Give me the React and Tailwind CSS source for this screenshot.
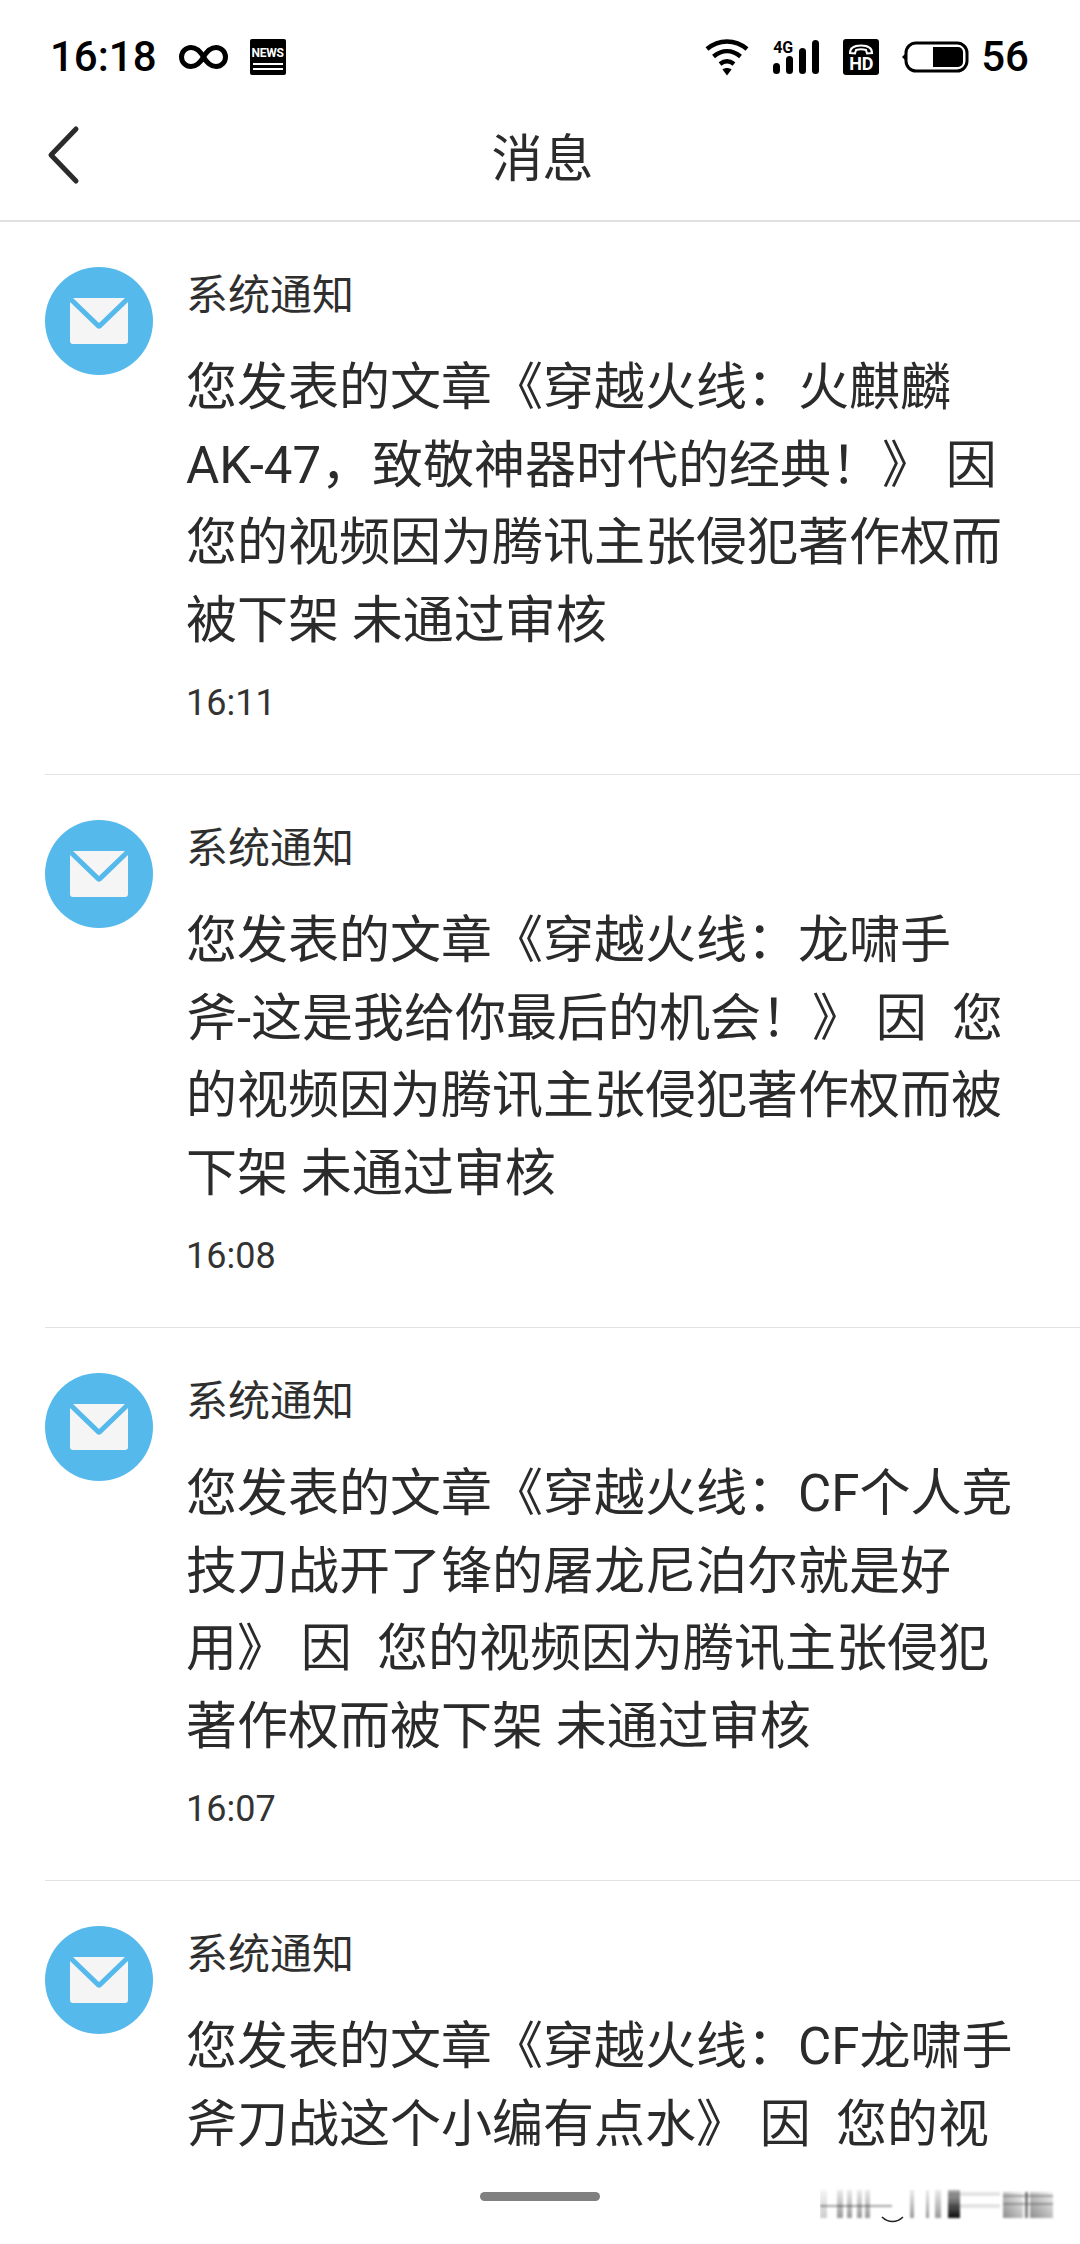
const COLON = '\uFF1A';
const COMMA = '\uFF0C';
const BANG = '\uFF01';

const items = [
  {
    lines: [`您发表的文章《穿越火线${COLON}火麒麟`, `AK-47${COMMA}致敬神器时代的经典${BANG}》 因`, '您的视频因为腾讯主张侵犯著作权而', '被下架 未通过审核'],
    time: '16:11',
  },
  {
    lines: [`您发表的文章《穿越火线${COLON}龙啸手`, `斧-这是我给你最后的机会${BANG}》 因  您`, '的视频因为腾讯主张侵犯著作权而被', '下架 未通过审核'],
    time: '16:08',
  },
  {
    lines: [`您发表的文章《穿越火线${COLON}CF个人竞`, '技刀战开了锋的屠龙尼泊尔就是好', '用》 因  您的视频因为腾讯主张侵犯', '著作权而被下架 未通过审核'],
    time: '16:07',
  },
  {
    lines: [`您发表的文章《穿越火线${COLON}CF龙啸手`, '斧刀战这个小编有点水》 因  您的视'],
  },
];

function StatusBar() {
  return (
    <div className="flex h-[96px] items-center justify-between pt-[18px] pl-[50px] pr-[51px] text-black">
      <div className="flex items-center gap-[22px]">
        <span className="font-['Roboto',sans-serif] text-[42px] leading-none font-medium">16:18</span>
        <svg width="49" height="24" viewBox="0 0 48 24" fill="none" stroke="black" strokeWidth="5">
          <path d="M24 12C20 5 16 2.500 11.500 2.500a9.500 9.500 0 0 0 0 19c4.500 0 8.500-2.500 12.500-9.500s8-9.500 12.500-9.500a9.500 9.500 0 0 1 0 19c-4.500 0-8.500-2.500-12.500-9.500Z" />
        </svg>
        <div className="flex h-[36px] w-[36px] flex-col items-center rounded-[2px] bg-black pt-[8px]">
          <span className="font-['Roboto',sans-serif] text-[12px] leading-none font-bold tracking-[-0.2px] text-white">NEWS</span>
          <div className="mt-[4px] h-[2px] w-[30px] bg-white" />
          <div className="mt-[3px] h-[2px] w-[30px] bg-white" />
        </div>
      </div>
      <div className="flex items-center">
        <svg width="44" height="38" viewBox="0 0 44 38" fill="none" stroke="black" strokeWidth="4.500">
          <path d="M2 11C14 1 30 1 42 11" />
          <path d="M8.500 18.500C17 11.500 27 11.500 35.500 18.500" />
          <path d="M15 26C19.500 22.500 24.500 22.500 29 26" />
          <path d="M17.500 31.500L22 37.500L26.500 31.500C24 29.500 20 29.500 17.500 31.500Z" fill="black" stroke="none" />
        </svg>
        <div className="relative ml-[24px] h-[34px] w-[46px]">
          <span className="absolute top-0 left-0 font-['Roboto',sans-serif] text-[16px] leading-none font-bold tracking-[-0.3px]">4G</span>
          <div className="absolute right-0 bottom-0 flex items-end gap-[6px]">
            <div className="h-[11px] w-[7px] rounded-full bg-black" />
            <div className="h-[18px] w-[7px] rounded-full bg-black" />
            <div className="h-[26px] w-[7px] rounded-full bg-black" />
            <div className="h-[34px] w-[7px] rounded-full bg-black" />
          </div>
        </div>
        <div className="ml-[24px] flex h-[36px] w-[36px] flex-col items-center rounded-[3px] bg-black pt-[5px]">
          <svg width="26" height="11" viewBox="0 0 26 11" fill="none">
            <path d="M2 9C2 3 8 1.500 13 1.500S24 3 24 9L19 9.500L18 6C15 5 11 5 8 6L7 9.500Z" stroke="white" strokeWidth="2" />
          </svg>
          <span className="font-['Roboto',sans-serif] text-[18px] leading-[17px] font-bold tracking-[-0.2px] text-white">HD</span>
        </div>
        <svg className="ml-[22px]" width="68" height="32" viewBox="0 0 68 32">
          <path d="M5 12L1 16L5 20Z" fill="black" />
          <rect x="5" y="2" width="61" height="28" rx="10" fill="none" stroke="black" strokeWidth="3" />
          <path d="M32 6H57a5 5 0 0 1 5 5V21a5 5 0 0 1-5 5H32Z" fill="black" />
        </svg>
        <span className="ml-[12px] font-['Roboto',sans-serif] text-[42px] leading-none font-medium">56</span>
      </div>
    </div>
  );
}

function NavBar() {
  return (
    <div className="relative flex h-[126px] items-center justify-center border-b-2 border-[#e0e0e0] pt-[2px] pl-[5px]">
      <svg className="absolute top-[29px] left-[45px]" width="36" height="60" viewBox="0 0 36 60" fill="none" stroke="#2b2b2b" strokeWidth="5" strokeLinecap="round" strokeLinejoin="round">
        <path d="M31 4L6 30L31 56" />
      </svg>
      <span className="text-[51px] leading-none text-[#2b2b2b]">消息</span>
    </div>
  );
}

function MailIcon() {
  return (
    <div className="flex h-[108px] w-[108px] shrink-0 items-center justify-center rounded-full bg-[#55b9ec]">
      <svg width="58" height="46" viewBox="0 0 58 46">
        <path d="M3 0H55L29 25Z" fill="#f5f5f5" />
        <path d="M0 4L27 30C28.200 31 29.800 31 31 30L58 4V43a3 3 0 0 1-3 3H3a3 3 0 0 1-3-3Z" fill="#f5f5f5" />
      </svg>
    </div>
  );
}

function MessageItem({ item }) {
  return (
    <div className="ml-[45px] flex gap-[33px] border-b border-[#e2e2e2] pt-[45px] pb-[50px] last:border-b-0">
      <MailIcon />
      <div className="min-w-0 flex-1">
        <div className="pt-[1px] text-[42px] leading-[56px] text-[#2f2f2f]">系统通知</div>
        <div className="mt-[25px] text-[51px] leading-[77.500px] whitespace-pre text-[#2b2b2b]">
          {item.lines.map((line) => (
            <div key={line}>{line}</div>
          ))}
        </div>
        {item.time && <div className="mt-[23px] font-['Roboto',sans-serif] text-[36px] leading-[42px] text-[#333333]">{item.time}</div>}
      </div>
    </div>
  );
}

export default function App() {
  return (
    <div className="relative h-[2244px] w-[1080px] overflow-hidden bg-white font-['Roboto','Noto_Sans_CJK_SC',sans-serif]">
      <StatusBar />
      <NavBar />
      <div>
        {items.map((item) => (
          <MessageItem key={item.lines[1]} item={item} />
        ))}
      </div>
      {/* home indicator */}
      <div className="absolute top-[2192px] left-[480px] h-[9px] w-[120px] rounded-full bg-[#808080]" />
      {/* blurred watermark */}
      <svg className="absolute top-[2186px] left-[820px]" width="236" height="38" viewBox="0 0 236 38">
        <defs>
          <linearGradient id="fade" x1="0" y1="0" x2="0" y2="1">
            <stop offset="0" stopColor="#000" stopOpacity="0.08" />
            <stop offset="1" stopColor="#000" stopOpacity="0.4" />
          </linearGradient>
          <linearGradient id="block" x1="0" y1="0" x2="0" y2="1">
            <stop offset="0" stopColor="#000" stopOpacity="0.3" />
            <stop offset="1" stopColor="#000" stopOpacity="0.95" />
          </linearGradient>
          <linearGradient id="side" x1="0" y1="1" x2="1" y2="0">
            <stop offset="0" stopColor="#000" stopOpacity="0.45" />
            <stop offset="1" stopColor="#000" stopOpacity="0.05" />
          </linearGradient>
        </defs>
        <g className="blur-[1px]">
          <path d="M0 20H72" stroke="#888" strokeWidth="1.500" />
          <path d="M128 8H180M128 20H180" stroke="#e4e4e4" strokeWidth="4" />
          <g fill="url(#fade)">
            <rect x="0" y="4" width="7" height="28" opacity="0.5" />
            <rect x="17" y="4" width="6" height="28" />
            <rect x="27" y="4" width="5" height="28" />
            <rect x="37" y="4" width="5" height="28" />
            <rect x="45" y="4" width="5" height="28" />
            <rect x="90" y="4" width="4" height="28" />
            <rect x="106" y="4" width="3" height="28" />
            <rect x="115" y="4" width="6" height="28" />
          </g>
          <rect x="128" y="4" width="12" height="28" fill="url(#block)" />
          <rect x="183" y="6" width="20" height="26" fill="url(#side)" />
          <rect x="205" y="6" width="3" height="26" fill="#000" opacity="0.5" />
          <rect x="210" y="6" width="23" height="26" fill="url(#side)" />
          <path d="M183 10H233M183 18H233" stroke="#555" strokeWidth="1.500" opacity="0.6" />
        </g>
        <path d="M62 31C68 37 77 37 83 31" fill="none" stroke="#222" strokeWidth="1.500" />
      </svg>
    </div>
  );
}
